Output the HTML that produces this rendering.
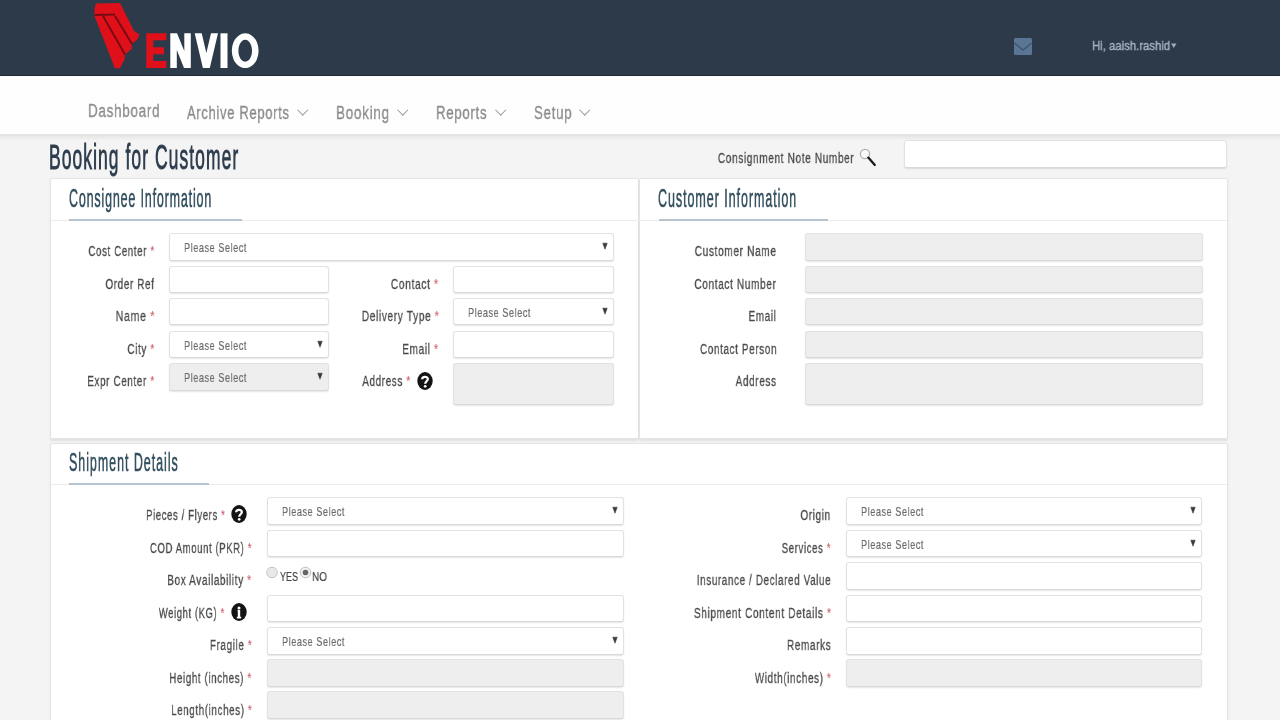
<!DOCTYPE html>
<html><head><meta charset="utf-8"><style>
*{box-sizing:border-box;margin:0;padding:0}
html,body{width:1280px;height:720px;overflow:hidden;background:#f4f4f4;font-family:"Liberation Sans",sans-serif;position:relative}
.hdr{position:absolute;left:0;top:0;width:1280px;height:76px;background:#2c3a4a;border-bottom:1px solid #1f2a36}
.logo{position:absolute;left:0;top:0}
.nav{position:absolute;left:0;top:76px;width:1280px;height:58px;background:#fefefe}
.nsh{position:absolute;left:0;top:134px;width:1280px;height:6px;background:linear-gradient(#e2e2e2,#ebebeb 60%,#f1f1f1)}
.nv{position:absolute;will-change:transform;letter-spacing:1px;-webkit-text-stroke:0.35px #8c8c8c;font-size:18px;color:#8c8c8c;white-space:nowrap;transform-origin:0 0;line-height:20px}
.chev{position:absolute;width:7.5px;height:7.5px;border-right:1.6px solid #9a9a9a;border-bottom:1.6px solid #9a9a9a;transform:rotate(45deg)}
.ttl{position:absolute;will-change:transform;white-space:nowrap;transform-origin:0 0;line-height:1;color:#2e3e4e}
.panel{position:absolute;background:#fff;border:1px solid #e4e4e4;border-radius:2px;box-shadow:0 1.5px 2px rgba(0,0,0,0.08)}
.ph{position:absolute;}
.lbl{position:absolute;will-change:transform;letter-spacing:0.9px;-webkit-text-stroke:0.3px #4a4a4a;white-space:nowrap;color:#4a4a4a;line-height:16px;text-align:right;transform-origin:100% 0}
.ast{color:#d0606f;-webkit-text-stroke:0.1px #d0606f}
.inp{position:absolute;background:#fff;border:1px solid #e2e2e2;border-bottom-color:#d9d9d9;border-radius:3px;box-shadow:0 1px 1.5px rgba(0,0,0,0.10)}
.inp.dis{background:#eeeeee}
.ph{position:absolute;will-change:transform;letter-spacing:0.8px;-webkit-text-stroke:0.2px #6b6b6b;left:14px;top:5.8px;font-size:13px;color:#6b6b6b;line-height:16px;white-space:nowrap;transform:scaleX(0.70);transform-origin:0 0}
.arr{position:absolute;right:5.5px;top:8px}
.qi{position:absolute;width:16px;height:16px;border-radius:50%;background:#111;color:#fff;font-weight:bold;font-size:13px;line-height:16px;text-align:center}
</style></head><body>
<div class="hdr"><svg class="logo" width="280" height="76" viewBox="0 0 280 76">
<polygon points="96,3.5 120,3 134,31 139.5,34.5 137,40 132,43.5 131.5,49 125,54.5 124.5,59.5 120,68 115,68.5 94.5,16 94.5,9" fill="#e0101b"/>
<path d="M94.5,15 L115,14.5 M103,16 L125,54.5 M115,16 L132,44" stroke="#760b12" stroke-width="1.9" fill="none"/>
<polygon points="146.3,33.3 166.4,33.3 166.4,40.3 153.3,40.3 153.3,47.3 164,47.3 164,54.3 153.3,54.3 153.3,61 166.4,61 166.4,68 146.3,68" fill="#e0101b"/>
<polygon points="170.3,33.3 177,33.3 184.3,51 184.3,33.3 190.8,33.3 190.8,68 184,68 176.8,50 176.8,68 170.3,68" fill="#fff"/>
<polygon points="194.7,33.3 201.7,33.3 206.35,53 211,33.3 218,33.3 209.8,68 202.9,68" fill="#fff"/>
<rect x="220.5" y="33.3" width="7" height="34.7" fill="#fff"/>
<path fill-rule="evenodd" fill="#fff" d="M245.2,33.3 a13.4,17.4 0 1,0 0.01,0 Z M245.2,39.7 a6.8,11 0 1,0 0.01,0 Z"/>
</svg>
<svg style="position:absolute;left:1014px;top:38px" width="18" height="17" viewBox="0 0 18 17"><rect x="0" y="0" width="18" height="17" rx="1.5" fill="#5a7694"/><path d="M0.5,5 L9,12 L17.5,5" stroke="#3f566e" stroke-width="1.4" fill="none"/></svg>
<div style="position:absolute;left:1091.5px;top:37.5px;font-size:13.5px;color:#a3b1bf;-webkit-text-stroke:0.45px #a3b1bf;will-change:transform;white-space:nowrap;line-height:16px;transform:scaleX(0.84);transform-origin:0 0">Hi, aaish.rashid</div>
<svg style="position:absolute;left:1170.5px;top:42.5px" width="6" height="6" viewBox="0 0 6 6"><path d="M0,0.5 L5.5,0.5 L2.75,5 Z" fill="#9babbb"/></svg>
</div>
<div class="nav">
<div class="nv" style="left:87.5px;top:25px;transform:scaleX(0.745)">Dashboard</div>
<div class="nv" style="left:186.8px;top:27px;transform:scaleX(0.718)">Archive Reports</div>
<div class="chev" style="left:298.6px;top:29.5px"></div>
<div class="nv" style="left:335.8px;top:27px;transform:scaleX(0.747)">Booking</div>
<div class="chev" style="left:399.2px;top:29.5px"></div>
<div class="nv" style="left:435.8px;top:27px;transform:scaleX(0.732)">Reports</div>
<div class="chev" style="left:497px;top:29.5px"></div>
<div class="nv" style="left:533.5px;top:27px;transform:scaleX(0.737)">Setup</div>
<div class="chev" style="left:581.2px;top:29.5px"></div>
</div>
<div class="nsh"></div>
<div class="ttl" style="left:49px;top:139.1px;font-size:35px;letter-spacing:2.1px;-webkit-text-stroke:0.9px #2e3e4e;transform:scaleX(0.5)">Booking for Customer</div>
<svg style="position:absolute;left:857px;top:145px" width="22" height="24" viewBox="0 0 22 24"><circle cx="8" cy="9" r="4.6" fill="#fafafa" stroke="#b0b0b0" stroke-width="1.3"/><path d="M11.3,12.6 L17.8,20" stroke="#1a1a1a" stroke-width="2.3" stroke-linecap="round"/></svg>
<div class="inp" style="left:904px;top:140px;width:323px;height:28px"></div>
<div class="panel" style="left:50px;top:178px;width:589px;height:261px"></div>
<div class="panel" style="left:639px;top:178px;width:589px;height:261px"></div>
<div class="panel" style="left:50px;top:443px;width:1178px;height:300px"></div>
<div style="position:absolute;left:51px;top:220px;width:1176px;height:1px;background:#ececec"></div>
<div style="position:absolute;left:51px;top:484px;width:1176px;height:1px;background:#ececec"></div>
<div style="position:absolute;left:69px;top:219px;width:173px;height:2px;background:#b6c4d0"></div>
<div style="position:absolute;left:659px;top:219px;width:169px;height:2px;background:#b6c4d0"></div>
<div style="position:absolute;left:69px;top:483px;width:140px;height:2px;background:#b6c4d0"></div>
<div class="ttl" style="left:69px;top:185.8px;font-size:25px;letter-spacing:1.65px;-webkit-text-stroke:0.6px #34505f;transform:scaleX(0.5);color:#34505f">Consignee Information</div>
<div class="ttl" style="left:658px;top:185.8px;font-size:25px;letter-spacing:1.9px;-webkit-text-stroke:0.6px #34505f;transform:scaleX(0.5);color:#34505f">Customer Information</div>
<div class="ttl" style="left:68.5px;top:450.1px;font-size:25px;letter-spacing:1.9px;-webkit-text-stroke:0.6px #34505f;transform:scaleX(0.5);color:#34505f">Shipment Details</div>
<svg style="position:absolute;left:266px;top:566px" width="64" height="16" viewBox="0 0 64 16">
<circle cx="6" cy="6.5" r="5.3" fill="#e9e9e9" stroke="#c4c4c4" stroke-width="1"/>
<circle cx="39.5" cy="6.5" r="5.3" fill="#f1f1f1" stroke="#bdbdbd" stroke-width="1"/>
<circle cx="39.5" cy="6.5" r="2.8" fill="#666"/>
</svg>
<div style="position:absolute;left:279.5px;top:569px;font-size:12.5px;color:#404040;-webkit-text-stroke:0.2px #404040;will-change:transform;line-height:16px;transform:scaleX(0.72);transform-origin:0 0">YES</div>
<div style="position:absolute;left:312px;top:569px;font-size:12.5px;color:#404040;-webkit-text-stroke:0.2px #404040;will-change:transform;line-height:16px;transform:scaleX(0.8);transform-origin:0 0">NO</div>
<div class="lbl" style="right:425.5px;top:149.9px;font-size:14px;transform:scaleX(0.7169);">Consignment Note Number</div>
<div class="lbl" style="right:1125px;top:243.4px;font-size:14px;transform:scaleX(0.6929);">Cost Center <span class="ast">*</span></div>
<div class="inp" style="left:169px;top:233px;width:445px;height:28px"><span class="ph">Please Select</span><svg class="arr" width="6" height="8" viewBox="0 0 6 8"><path d="M0.8,1.2 L5.2,1.2 L3,7.2 Z" fill="#3a3a3a" stroke="#3a3a3a" stroke-width="0.6" stroke-linejoin="round"/></svg></div>
<div class="lbl" style="right:1125px;top:275.9px;font-size:14px;transform:scaleX(0.7056);">Order Ref</div>
<div class="inp" style="left:169px;top:266px;width:160px;height:27px"></div>
<div class="lbl" style="right:1125px;top:307.9px;font-size:14px;transform:scaleX(0.7571);">Name <span class="ast">*</span></div>
<div class="inp" style="left:169px;top:298px;width:160px;height:27px"></div>
<div class="lbl" style="right:1125px;top:340.9px;font-size:14px;transform:scaleX(0.7074);">City <span class="ast">*</span></div>
<div class="inp" style="left:169px;top:331px;width:160px;height:27px"><span class="ph">Please Select</span><svg class="arr" width="6" height="8" viewBox="0 0 6 8"><path d="M0.8,1.2 L5.2,1.2 L3,7.2 Z" fill="#3a3a3a" stroke="#3a3a3a" stroke-width="0.6" stroke-linejoin="round"/></svg></div>
<div class="lbl" style="right:1125px;top:372.9px;font-size:14px;transform:scaleX(0.7053);">Expr Center <span class="ast">*</span></div>
<div class="inp dis" style="left:169px;top:363px;width:160px;height:28px"><span class="ph">Please Select</span><svg class="arr" width="6" height="8" viewBox="0 0 6 8"><path d="M0.8,1.2 L5.2,1.2 L3,7.2 Z" fill="#3a3a3a" stroke="#3a3a3a" stroke-width="0.6" stroke-linejoin="round"/></svg></div>
<div class="lbl" style="right:841px;top:275.9px;font-size:14px;transform:scaleX(0.7277);">Contact <span class="ast">*</span></div>
<div class="inp" style="left:453px;top:266px;width:161px;height:27px"></div>
<div class="lbl" style="right:841px;top:307.9px;font-size:14px;transform:scaleX(0.7228);">Delivery Type <span class="ast">*</span></div>
<div class="inp" style="left:453px;top:298px;width:161px;height:27px"><span class="ph">Please Select</span><svg class="arr" width="6" height="8" viewBox="0 0 6 8"><path d="M0.8,1.2 L5.2,1.2 L3,7.2 Z" fill="#3a3a3a" stroke="#3a3a3a" stroke-width="0.6" stroke-linejoin="round"/></svg></div>
<div class="lbl" style="right:841px;top:340.9px;font-size:14px;transform:scaleX(0.7200);">Email <span class="ast">*</span></div>
<div class="inp" style="left:453px;top:331px;width:161px;height:27px"></div>
<div class="lbl" style="right:869px;top:372.9px;font-size:14px;transform:scaleX(0.7053);">Address <span class="ast">*</span></div>
<svg style="position:absolute;left:417px;top:371.5px" width="16" height="18" viewBox="0 0 16 18"><ellipse cx="8" cy="9" rx="7.7" ry="9" fill="#141414"/><path d="M5.2,7.2 C5.2,4.1 10.8,4.1 10.8,7 C10.8,9.2 8.2,9.3 8.2,11.8" stroke="#fff" stroke-width="2.3" fill="none"/><circle cx="8.2" cy="14.3" r="1.35" fill="#fff"/></svg>
<div class="inp dis" style="left:453px;top:363px;width:161px;height:42px"></div>
<div class="lbl" style="right:503px;top:243.4px;font-size:14px;transform:scaleX(0.7209);">Customer Name</div>
<div class="inp dis" style="left:805px;top:233px;width:398px;height:28px"></div>
<div class="lbl" style="right:503px;top:275.9px;font-size:14px;transform:scaleX(0.7174);">Contact Number</div>
<div class="inp dis" style="left:805px;top:266px;width:398px;height:27px"></div>
<div class="lbl" style="right:503px;top:307.9px;font-size:14px;transform:scaleX(0.7074);">Email</div>
<div class="inp dis" style="left:805px;top:298px;width:398px;height:27px"></div>
<div class="lbl" style="right:503px;top:340.9px;font-size:14px;transform:scaleX(0.7062);">Contact Person</div>
<div class="inp dis" style="left:805px;top:331px;width:398px;height:27px"></div>
<div class="lbl" style="right:503px;top:372.9px;font-size:14px;transform:scaleX(0.7113);">Address</div>
<div class="inp dis" style="left:805px;top:363px;width:398px;height:42px"></div>
<div class="lbl" style="right:1055px;top:507.4px;font-size:14px;transform:scaleX(0.6818);">Pieces / Flyers <span class="ast">*</span></div>
<svg style="position:absolute;left:231px;top:505.4px" width="16" height="18" viewBox="0 0 16 18"><ellipse cx="8" cy="9" rx="7.7" ry="9" fill="#141414"/><path d="M5.2,7.2 C5.2,4.1 10.8,4.1 10.8,7 C10.8,9.2 8.2,9.3 8.2,11.8" stroke="#fff" stroke-width="2.3" fill="none"/><circle cx="8.2" cy="14.3" r="1.35" fill="#fff"/></svg>
<div class="inp" style="left:267px;top:497px;width:357px;height:28px"><span class="ph">Please Select</span><svg class="arr" width="6" height="8" viewBox="0 0 6 8"><path d="M0.8,1.2 L5.2,1.2 L3,7.2 Z" fill="#3a3a3a" stroke="#3a3a3a" stroke-width="0.6" stroke-linejoin="round"/></svg></div>
<div class="lbl" style="right:1028px;top:539.9px;font-size:14px;transform:scaleX(0.6800);">COD Amount (PKR) <span class="ast">*</span></div>
<div class="inp" style="left:267px;top:530px;width:357px;height:27px"></div>
<div class="lbl" style="right:1028px;top:572.4px;font-size:14px;transform:scaleX(0.7115);">Box Availability <span class="ast">*</span></div>
<div class="lbl" style="right:1055px;top:604.9px;font-size:14px;transform:scaleX(0.6744);">Weight (KG) <span class="ast">*</span></div>
<svg style="position:absolute;left:231px;top:602.5px" width="16" height="18" viewBox="0 0 16 18"><ellipse cx="8" cy="9" rx="7.7" ry="9" fill="#141414"/><circle cx="8" cy="4.9" r="1.5" fill="#fff"/><path d="M8,7.2 V14" stroke="#fff" stroke-width="2.4"/><path d="M5.8,14.6 H10.2" stroke="#fff" stroke-width="1.8"/><path d="M6.6,7.6 H8.5" stroke="#fff" stroke-width="1.3"/></svg>
<div class="inp" style="left:267px;top:595px;width:357px;height:27px"></div>
<div class="lbl" style="right:1028px;top:637.4px;font-size:14px;transform:scaleX(0.7029);">Fragile <span class="ast">*</span></div>
<div class="inp" style="left:267px;top:627px;width:357px;height:28px"><span class="ph">Please Select</span><svg class="arr" width="6" height="8" viewBox="0 0 6 8"><path d="M0.8,1.2 L5.2,1.2 L3,7.2 Z" fill="#3a3a3a" stroke="#3a3a3a" stroke-width="0.6" stroke-linejoin="round"/></svg></div>
<div class="lbl" style="right:1028px;top:669.9px;font-size:14px;transform:scaleX(0.6946);">Height (inches) <span class="ast">*</span></div>
<div class="inp dis" style="left:267px;top:659px;width:357px;height:28px"></div>
<div class="lbl" style="right:1028px;top:701.9px;font-size:14px;transform:scaleX(0.6983);">Length(inches) <span class="ast">*</span></div>
<div class="inp dis" style="left:267px;top:691px;width:357px;height:28px"></div>
<div class="lbl" style="right:449px;top:507.4px;font-size:14px;transform:scaleX(0.7086);">Origin</div>
<div class="inp" style="left:846px;top:497px;width:356px;height:28px"><span class="ph">Please Select</span><svg class="arr" width="6" height="8" viewBox="0 0 6 8"><path d="M0.8,1.2 L5.2,1.2 L3,7.2 Z" fill="#3a3a3a" stroke="#3a3a3a" stroke-width="0.6" stroke-linejoin="round"/></svg></div>
<div class="lbl" style="right:449px;top:539.9px;font-size:14px;transform:scaleX(0.6848);">Services <span class="ast">*</span></div>
<div class="inp" style="left:846px;top:530px;width:356px;height:27px"><span class="ph">Please Select</span><svg class="arr" width="6" height="8" viewBox="0 0 6 8"><path d="M0.8,1.2 L5.2,1.2 L3,7.2 Z" fill="#3a3a3a" stroke="#3a3a3a" stroke-width="0.6" stroke-linejoin="round"/></svg></div>
<div class="lbl" style="right:449px;top:572.4px;font-size:14px;transform:scaleX(0.7032);">Insurance / Declared Value</div>
<div class="inp" style="left:846px;top:562px;width:356px;height:28px"></div>
<div class="lbl" style="right:449px;top:604.9px;font-size:14px;transform:scaleX(0.7185);">Shipment Content Details <span class="ast">*</span></div>
<div class="inp" style="left:846px;top:595px;width:356px;height:27px"></div>
<div class="lbl" style="right:449px;top:637.4px;font-size:14px;transform:scaleX(0.7119);">Remarks</div>
<div class="inp" style="left:846px;top:627px;width:356px;height:28px"></div>
<div class="lbl" style="right:449px;top:669.9px;font-size:14px;transform:scaleX(0.7062);">Width(inches) <span class="ast">*</span></div>
<div class="inp dis" style="left:846px;top:659px;width:356px;height:28px"></div>
</body></html>
